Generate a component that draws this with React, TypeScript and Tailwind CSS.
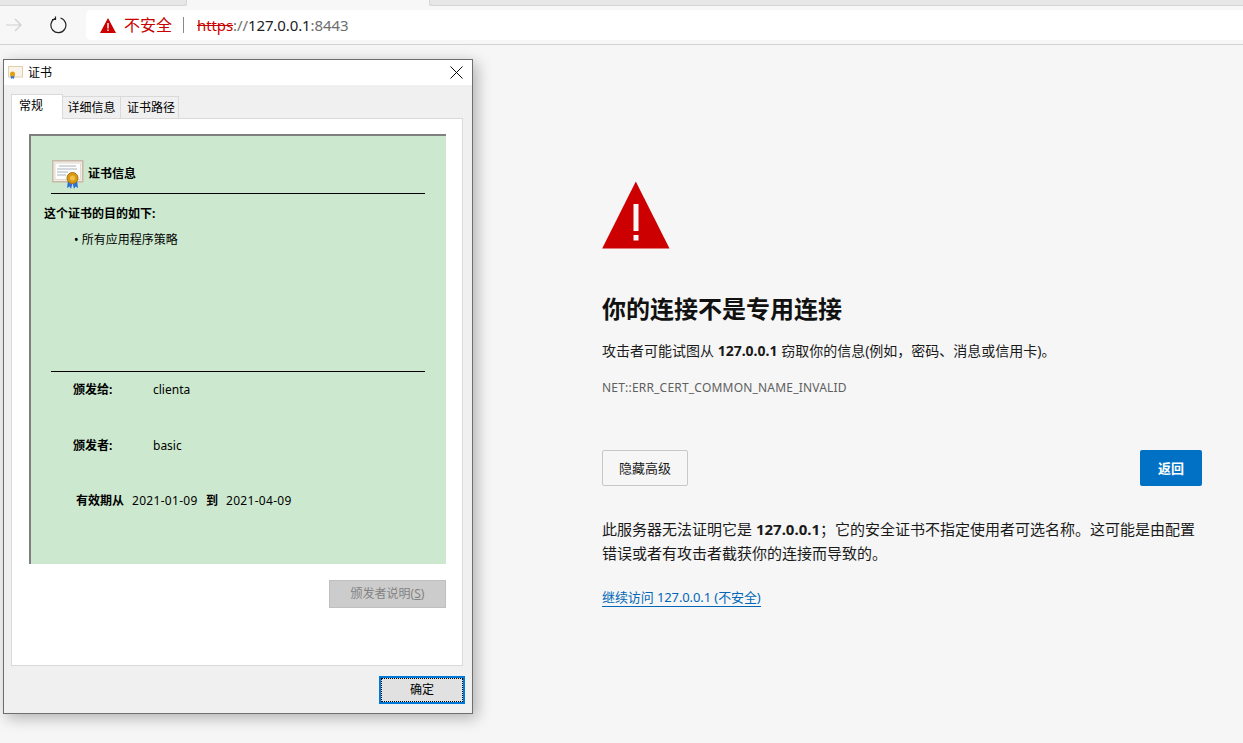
import { X } from "lucide-react";

const font = { fontFamily: '"Noto Sans", "Noto Sans CJK SC", sans-serif' };

function CertIcon({ className }: { className: string }) {
  return (
    <svg className={className} viewBox="0 0 32 29">
      <rect x="0.750" y="0.750" width="30" height="21" fill="#f3efe8" stroke="#c8b8a8" strokeWidth="1.500" />
      <rect x="3" y="3" width="25.500" height="16.500" fill="#fdfdfd" stroke="#e2dccf" />
      <path d="M7 6h17M5 9h20M5 12h11M5 15h9" stroke="#a9b4bd" strokeWidth="1" />
      <path d="M16 20l-1 8 2.500-1.500 1.500 2.500 1.500-6 1.500 6 1.500-2.500 2.500 1.500-1-8z" fill="#2f6fd6" />
      <circle cx="20.500" cy="18" r="5.500" fill="#d99a12" stroke="#a8740c" />
      <circle cx="20.500" cy="18" r="2.500" fill="#efc14a" />
    </svg>
  );
}

function SmallCertIcon() {
  return (
    <svg className="w-[15px] h-[13px] shrink-0" viewBox="0 0 15 13">
      <rect x="0.500" y="0.500" width="14" height="10.500" fill="#f8f4ec" stroke="#e3cfa9" />
      <path d="M2.500 9l0.500 4 1.500-1 1.500 1 0.500-4z" fill="#2f6fd6" />
      <circle cx="4.500" cy="8" r="2.500" fill="#e0a010" />
    </svg>
  );
}

function CertDialog() {
  return (
    <div className="absolute left-[3px] top-[59px] w-[470px] h-[655px] flex flex-col bg-[#f0f0f0] border border-[#6e6e6e] shadow-[4px_4px_14px_rgba(0,0,0,0.28)] text-[12px] text-black">
      <div className="h-[25px] shrink-0 bg-white flex items-center pl-1 pr-[4px]">
        <SmallCertIcon />
        <span className="ml-[5px] leading-none">证书</span>
        <X className="ml-auto w-[23px] h-[23px] text-black" strokeWidth={1} />
      </div>

      <div className="flex items-end h-[33px] pl-[7px] shrink-0 relative z-10">
        <div className="w-[52px] h-[25px] mb-[-1px] bg-white border border-b-0 border-[#d9d9d9] pl-[7px] pt-[2px] leading-[18px]">常规</div>
        <div className="w-[58px] h-[22px] bg-[#f0f0f0] border border-b-0 border-l-0 border-[#d9d9d9] text-center leading-[22px]">详细信息</div>
        <div className="w-[58px] h-[22px] bg-[#f0f0f0] border border-b-0 border-l-0 border-[#d9d9d9] pl-[6px] leading-[22px]">证书路径</div>
      </div>

      <div className="ml-[7px] w-[452px] h-[548px] bg-white border border-[#d9d9d9] pl-[18px] pt-[15px] flex flex-col shrink-0">
        <div className="ml-[-1px] w-[417px] h-[430px] bg-[#cce9cf] border-l-2 border-t-2 border-[#7f7f7f] flex flex-col pl-[20px]">
          <div className="w-[374px] h-[58px] shrink-0 border-b border-black flex items-end pb-[4px] font-bold">
            <CertIcon className="w-[32px] h-[29px] ml-[1px]" />
            <span className="ml-[4px] mb-[5px] leading-[20px]">证书信息</span>
          </div>
          <div className="ml-[-7px] mt-[11px] font-bold leading-[18px]">这个证书的目的如下:</div>
          <div className="ml-[23px] mt-[8px] leading-[18px]">• 所有应用程序策略</div>
          <div className="w-[374px] mt-[122px] border-b border-black" />
          <div className="mt-[9px] pl-[22px] leading-[18px] flex">
            <span className="w-[80px] font-bold">颁发给:</span>
            <span>clienta</span>
          </div>
          <div className="mt-[38px] pl-[22px] leading-[18px] flex">
            <span className="w-[80px] font-bold">颁发者:</span>
            <span>basic</span>
          </div>
          <div className="mt-[37px] pl-[25px] leading-[18px] flex">
            <span className="w-[56px] font-bold">有效期从</span>
            <span className="w-[74px] tracking-[0.3px]">2021-01-09</span>
            <span className="w-[20px] font-bold">到</span>
            <span className="tracking-[0.3px]">2021-04-09</span>
          </div>
        </div>
        <div className="ml-[299px] mt-[16px] w-[117px] h-[28px] bg-[#cccccc] border border-[#bfbfbf] text-[#838383] text-center leading-[26px]">
          颁发者说明(<span className="underline">S</span>)
        </div>
      </div>

      <div className="ml-[375px] mt-[10px] w-[86px] h-[28px] bg-[#e1e1e1] border-2 border-[#0078d7] shrink-0">
        <div className="h-full border border-dotted border-black text-center leading-[22px]">确定</div>
      </div>
    </div>
  );
}

export default function App() {
  return (
    <div style={font} className="relative w-[1243px] h-[743px] overflow-hidden bg-[#f6f6f6]">
      {/* tab strip */}
      <div className="h-[6px] bg-[#e7e7e7] flex">
        <div className="w-[187px] border-r border-b border-[#d5d5d5] rounded-br" />
        <div className="w-[242px] bg-[#f7f7f7]" />
        <div className="flex-1 border-l border-b border-[#d5d5d5] rounded-bl" />
      </div>

      {/* toolbar */}
      <div className="h-[39px] bg-[#f7f7f7] border-b border-[#d2d2d2] flex items-center">
        <svg className="ml-[5px] w-[18px] h-[18px]" viewBox="0 0 18 18" fill="none" stroke="#d0d0d0" strokeWidth="1.200">
          <path d="M1 9h15M10 3l6 6-6 6" />
        </svg>
        <svg className="ml-[26px] w-[18px] h-[18px]" viewBox="0 0 18 18" fill="none" stroke="#222" strokeWidth="1.200">
          <path d="M6 2.500A7.500 7.500 0 1 0 11.500 2M6.500 0.500v3h-3.500" />
        </svg>
        <div className="ml-[19px] flex-1 h-[30px] bg-white rounded-l-[5px] flex items-center pl-[14px] text-[15px]">
          <svg className="w-[16px] h-[15px]" viewBox="0 0 16 15">
            <path d="M8 0l8 15H0z" fill="#cc0000" />
            <path d="M7.300 5h1.400v5.500H7.300zM7.300 11.500h1.400V13H7.300z" fill="#fff" />
          </svg>
          <span className="ml-[8px] text-[16px] text-[#c80000]">不安全</span>
          <span className="ml-[11px] w-px h-[16px] bg-[#8a8a8a]" />
          <span className="ml-[13px] text-[#c80000] line-through tracking-[-0.1px]">https</span>
          <span className="text-[#6e6e6e] tracking-[-0.1px]">://</span>
          <span className="text-[#222] tracking-[-0.1px]">127.0.0.1</span>
          <span className="text-[#6e6e6e] tracking-[-0.1px]">:8443</span>
        </div>
      </div>

      <CertDialog />

      {/* error page */}
      <div className="ml-[602px] w-[600px] pt-[136px] text-[13px] text-[#1a1a1a]">
        <svg className="w-[68px] h-[68px]" viewBox="0 0 68 68">
          <path d="M33.800 0.500L67.500 67.500H0.200z" fill="#cc0000" />
          <path d="M31.500 23h5v27h-5zM31.500 54h5v5.500h-5z" fill="#f6f6f6" />
        </svg>
        <h1 className="mt-[42px] text-[24px] leading-[36px] font-bold text-[#111]">你的连接不是专用连接</h1>
        <p className="mt-[14px] text-[14px] leading-[20px]">
          攻击者可能试图从 <b>127.0.0.1</b> 窃取你的信息(例如，密码、消息或信用卡)。
        </p>
        <p className="mt-[17px] text-[12px] tracking-[0.2px] leading-[20px] text-[#5f5f5f]">NET::ERR_CERT_COMMON_NAME_INVALID</p>
        <div className="mt-[52px] flex justify-between">
          <div className="w-[86px] h-[36px] border border-[#c8c8c8] rounded-[2px] text-center leading-[34px]">隐藏高级</div>
          <div className="w-[62px] h-[36px] bg-[#0071c5] rounded-[2px] text-white font-bold text-center leading-[36px]">返回</div>
        </div>
        <p className="mt-[31px] text-[15px] leading-[24px]">
          此服务器无法证明它是 <b>127.0.0.1</b>；它的安全证书不指定使用者可选名称。这可能是由配置错误或者有攻击者截获你的连接而导致的。
        </p>
        <a className="inline-block mt-[23px] text-[#0067b8] border-b border-[#0067b8] leading-[18px] tracking-[-0.1px]">继续访问 127.0.0.1 (不安全)</a>
      </div>
    </div>
  );
}
